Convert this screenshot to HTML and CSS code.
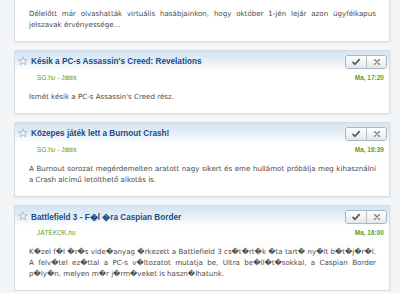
FILE: index.html
```html
<!DOCTYPE html>
<html lang="hu">
<head>
    <meta charset="UTF-8">
    <meta name="viewport" content="width=device-width, initial-scale=1.0">
    <title>Hírek</title>
    <link rel="stylesheet" href="styles.css">
</head>
<body>
    <main class="feed">
        <article class="news-card news-card--cut">
            <p class="news-text">Délelőtt már olvashatták virtuális hasábjainkon, hogy október 1-jén lejár azon ügyfélkapus jelszavak érvényessége...</p>
        </article>

        <article class="news-card">
            <header class="news-head">
                <svg class="star" viewBox="0 0 10 10" width="10" height="10"><path d="M5 0.8 L6.2 3.6 L9.3 3.8 L6.9 5.8 L7.7 8.9 L5 7.2 L2.3 8.9 L3.1 5.8 L0.7 3.8 L3.8 3.6 Z"/></svg>
                <h2 class="news-title">Késik a PC-s Assassin's Creed: Revelations</h2>
                <div class="news-actions">
                    <button class="act-btn"><svg viewBox="0 0 10 10" width="10" height="10"><path class="tick" d="M2 5.4 L4 7.3 L8.2 2.6"/></svg></button>
                    <button class="act-btn"><svg viewBox="0 0 10 10" width="10" height="10"><path class="cross" d="M2.5 2.5 L7.5 7.5 M7.5 2.5 L2.5 7.5"/></svg></button>
                </div>
            </header>
            <div class="news-meta">
                <span class="news-source">SG.hu - Játék</span>
                <span class="news-date">Ma, 17:20</span>
            </div>
            <p class="news-text">Ismét késik a PC-s Assassin's Creed rész.</p>
        </article>

        <article class="news-card">
            <header class="news-head">
                <svg class="star" viewBox="0 0 10 10" width="10" height="10"><path d="M5 0.8 L6.2 3.6 L9.3 3.8 L6.9 5.8 L7.7 8.9 L5 7.2 L2.3 8.9 L3.1 5.8 L0.7 3.8 L3.8 3.6 Z"/></svg>
                <h2 class="news-title">Közepes játék lett a Burnout Crash!</h2>
                <div class="news-actions">
                    <button class="act-btn"><svg viewBox="0 0 10 10" width="10" height="10"><path class="tick" d="M2 5.4 L4 7.3 L8.2 2.6"/></svg></button>
                    <button class="act-btn"><svg viewBox="0 0 10 10" width="10" height="10"><path class="cross" d="M2.5 2.5 L7.5 7.5 M7.5 2.5 L2.5 7.5"/></svg></button>
                </div>
            </header>
            <div class="news-meta">
                <span class="news-source">SG.hu - Játék</span>
                <span class="news-date">Ma, 16:39</span>
            </div>
            <p class="news-text">A Burnout sorozat megérdemelten aratott nagy sikert és eme hullámot próbálja meg kihasználni a Crash alcímű letölthető alkotás is.</p>
        </article>

        <article class="news-card">
            <header class="news-head">
                <svg class="star" viewBox="0 0 10 10" width="10" height="10"><path d="M5 0.8 L6.2 3.6 L9.3 3.8 L6.9 5.8 L7.7 8.9 L5 7.2 L2.3 8.9 L3.1 5.8 L0.7 3.8 L3.8 3.6 Z"/></svg>
                <h2 class="news-title">Battlefield 3 - F�l �ra Caspian Border</h2>
                <div class="news-actions">
                    <button class="act-btn"><svg viewBox="0 0 10 10" width="10" height="10"><path class="tick" d="M2 5.4 L4 7.3 L8.2 2.6"/></svg></button>
                    <button class="act-btn"><svg viewBox="0 0 10 10" width="10" height="10"><path class="cross" d="M2.5 2.5 L7.5 7.5 M7.5 2.5 L2.5 7.5"/></svg></button>
                </div>
            </header>
            <div class="news-meta">
                <span class="news-source">JÁTÉKOK.hu</span>
                <span class="news-date">Ma, 16:00</span>
            </div>
            <p class="news-text">K�zel f�l �r�s vide�anyag �rkezett a Battlefield 3 cs�t�rt�k �ta tart� ny�lt b�t�j�r�l. A felv�tel ez�ttal a PC-s v�ltozatot mutatja be, Ultra be�ll�t�sokkal, a Caspian Border p�ly�n, melyen m�r j�rm�veket is haszn�lhatunk.</p>
        </article>
    </main>
</body>
</html>
```

FILE: styles.css
```css
:root {
    --page-bg: #f3f5f7;
    --card-border: #d5dce3;
    --title-blue: #1d4a82;
    --green: #5b9f2f;
    --text: #4a4a4a;
}

* {
    box-sizing: border-box;
    margin: 0;
    padding: 0;
}

body {
    background: var(--page-bg);
    font-family: "DejaVu Sans", Verdana, sans-serif;
    color: var(--text);
}

.feed {
    display: flex;
    flex-direction: column;
    gap: 8px;
    width: 376px;
    margin-left: 14px;
}

.news-card {
    background: #fff;
    border: 1px solid var(--card-border);
    box-shadow: 1px 1px 2px rgba(0,0,0,0.06);
}

.news-card--cut {
    border-top: none;
}

.news-card--cut .news-text {
    padding-top: 8px;
}

.news-head {
    height: 20px;
    display: flex;
    align-items: center;
    padding: 0 2px 0 2px;
    background: linear-gradient(180deg, #d3e4f2 0%, #e4eff8 50%, #ffffff 100%);
}

.star {
    flex: none;
    margin: 0 3px 0 1px;
    fill: none;
    stroke: #a6b3c4;
    stroke-width: 0.8;
    stroke-linejoin: round;
}

.news-title {
    flex: 1;
    font-family: "Liberation Sans", Arial, sans-serif;
    font-size: 8.2px;
    font-weight: bold;
    color: var(--title-blue);
    white-space: nowrap;
}

.news-actions {
    display: flex;
    border: 1px solid #a9b5c2;
    border-radius: 3px;
    overflow: hidden;
    margin-top: 2px;
}

.act-btn {
    width: 20px;
    height: 12px;
    border: none;
    background: linear-gradient(180deg, #ffffff, #e4e8ec);
    display: flex;
    align-items: center;
    justify-content: center;
}

.act-btn + .act-btn {
    border-left: 1px solid #b5bfca;
}

.act-btn svg {
    fill: none;
    stroke-linecap: round;
    stroke-linejoin: round;
}

.tick {
    stroke: #555;
    stroke-width: 1.6;
}

.cross {
    stroke: #777;
    stroke-width: 1.1;
}

.news-meta {
    display: flex;
    justify-content: space-between;
    align-items: center;
    height: 10px;
    padding: 0 5px 0 22px;
    margin-top: 1px;
    font-family: "Liberation Sans", Arial, sans-serif;
    font-size: 6.5px;
    color: var(--green);
}

.news-date {
    font-weight: bold;
}

.news-text {
    padding: 9px 13px 11px 14px;
    font-size: 7.1px;
    line-height: 11px;
    text-align: justify;
}
```
